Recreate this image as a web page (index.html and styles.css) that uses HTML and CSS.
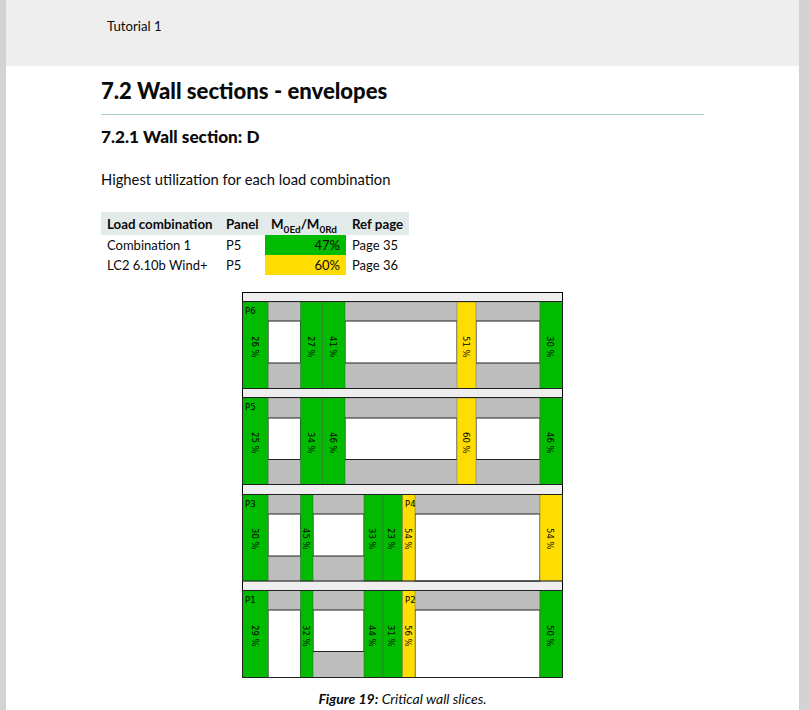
FILE: index.html
```html
<!DOCTYPE html>
<html lang="en">
<head>
<meta charset="utf-8">
<title>Tutorial 1</title>
<link rel="stylesheet" href="styles.css">
</head>
<body>
<div class="page">
  <header class="top"><span class="top-title">Tutorial 1</span></header>
  <main class="content">
    <h1 class="h1">7.2 Wall sections - envelopes</h1>
    <h2 class="h2">7.2.1 Wall section: D</h2>
    <p class="intro">Highest utilization for each load combination</p>
    <table class="util">
      <colgroup><col class="c1"><col class="c2"><col class="c3"><col class="c4"></colgroup>
      <thead>
        <tr><th>Load combination</th><th>Panel</th><th class="ratio">M<sub>0Ed</sub>/M<sub>0Rd</sub></th><th>Ref page</th></tr>
      </thead>
      <tbody>
        <tr><td>Combination 1</td><td>P5</td><td class="val green">47%</td><td>Page 35</td></tr>
        <tr><td>LC2 6.10b Wind+</td><td>P5</td><td class="val yellow">60%</td><td>Page 36</td></tr>
      </tbody>
    </table>
    <figure class="fig">
      <svg class="wall" width="322" height="388" viewBox="242 292 322 388" xmlns="http://www.w3.org/2000/svg">
        <rect class="strip" x="242.5" y="292.5" width="320" height="385"/>

        <!-- Row P6 -->
        <rect class="gray" x="268" y="302" width="272" height="86.5"/>
        <rect class="win" x="268" y="321" width="32.5" height="42"/>
        <rect class="win" x="345" y="321" width="112" height="42"/>
        <rect class="win" x="476" y="321" width="64" height="42"/>
        <rect class="g" x="242.5" y="302" width="25.5" height="86.5"/>
        <rect class="g" x="300.5" y="302" width="22" height="86.5"/>
        <rect class="g" x="322.5" y="302" width="22.5" height="86.5"/>
        <rect class="y" x="457" y="302" width="19" height="86.5"/>
        <rect class="g" x="540" y="302" width="22.5" height="86.5"/>
        <rect class="row" x="242.5" y="301.5" width="320" height="87"/>

        <!-- Row P5 -->
        <rect class="gray" x="268" y="398" width="272" height="86.5"/>
        <rect class="win" x="268" y="418" width="32.5" height="41.5"/>
        <rect class="win" x="345" y="418" width="112" height="41.5"/>
        <rect class="win" x="476" y="418" width="64" height="41.5"/>
        <rect class="g" x="242.5" y="398" width="25.5" height="86.5"/>
        <rect class="g" x="300.5" y="398" width="22" height="86.5"/>
        <rect class="g" x="322.5" y="398" width="22.5" height="86.5"/>
        <rect class="y" x="457" y="398" width="19" height="86.5"/>
        <rect class="g" x="540" y="398" width="22.5" height="86.5"/>
        <rect class="row" x="242.5" y="397.5" width="320" height="87"/>

        <!-- Row P3 / P4 -->
        <rect class="gray" x="268" y="494.5" width="272" height="86.5"/>
        <rect class="win" x="268" y="514" width="32.5" height="42"/>
        <rect class="win" x="313" y="514" width="51" height="42"/>
        <rect class="win" x="415" y="514" width="125" height="67"/>
        <rect class="g" x="242.5" y="494.5" width="25.5" height="86.5"/>
        <rect class="g" x="300.5" y="494.5" width="12.5" height="86.5"/>
        <rect class="g" x="364" y="494.5" width="19" height="86.5"/>
        <rect class="g" x="383" y="494.5" width="19.5" height="86.5"/>
        <rect class="y" x="402.5" y="494.5" width="12.5" height="86.5"/>
        <rect class="y" x="540" y="494.5" width="22.5" height="86.5"/>
        <rect class="row" x="242.5" y="494.5" width="320" height="86.5"/>

        <!-- Row P1 / P2 -->
        <rect class="gray" x="268" y="590.5" width="272" height="87"/>
        <rect class="win" x="268" y="610" width="32.5" height="67.5"/>
        <rect class="win" x="313" y="610" width="51" height="41.5"/>
        <rect class="win" x="415" y="610" width="125" height="67.5"/>
        <rect class="g" x="242.5" y="590.5" width="25.5" height="87"/>
        <rect class="g" x="300.5" y="590.5" width="12.5" height="87"/>
        <rect class="g" x="364" y="590.5" width="19" height="87"/>
        <rect class="g" x="383" y="590.5" width="19.5" height="87"/>
        <rect class="y" x="402.5" y="590.5" width="12.5" height="87"/>
        <rect class="g" x="540" y="590.5" width="22.5" height="87"/>
        <rect class="row" x="242.5" y="590.5" width="320" height="87"/>

        <!-- Panel labels -->
        <text class="lbl" x="245" y="314">P6</text>
        <text class="lbl" x="245" y="410">P5</text>
        <text class="lbl" x="245" y="507">P3</text>
        <text class="lbl" x="405" y="507">P4</text>
        <text class="lbl" x="245" y="603">P1</text>
        <text class="lbl" x="405" y="603">P2</text>

        <!-- Utilization labels -->
        <text class="pct" transform="translate(252 336) rotate(90)">26 %</text>
        <text class="pct" transform="translate(308 336) rotate(90)">27 %</text>
        <text class="pct" transform="translate(330 336) rotate(90)">41 %</text>
        <text class="pct" transform="translate(463 336) rotate(90)">51 %</text>
        <text class="pct" transform="translate(547 336) rotate(90)">30 %</text>

        <text class="pct" transform="translate(252 432) rotate(90)">25 %</text>
        <text class="pct" transform="translate(308 432) rotate(90)">34 %</text>
        <text class="pct" transform="translate(330 432) rotate(90)">46 %</text>
        <text class="pct" transform="translate(463 432) rotate(90)">60 %</text>
        <text class="pct" transform="translate(547 432) rotate(90)">46 %</text>

        <text class="pct" transform="translate(252 528) rotate(90)">30 %</text>
        <text class="pct" transform="translate(303 528) rotate(90)">45 %</text>
        <text class="pct" transform="translate(369 528) rotate(90)">33 %</text>
        <text class="pct" transform="translate(388 528) rotate(90)">23 %</text>
        <text class="pct" transform="translate(405 528) rotate(90)">54 %</text>
        <text class="pct" transform="translate(547 528) rotate(90)">54 %</text>

        <text class="pct" transform="translate(252 625) rotate(90)">29 %</text>
        <text class="pct" transform="translate(303 625) rotate(90)">32 %</text>
        <text class="pct" transform="translate(369 625) rotate(90)">44 %</text>
        <text class="pct" transform="translate(388 625) rotate(90)">31 %</text>
        <text class="pct" transform="translate(405 625) rotate(90)">56 %</text>
        <text class="pct" transform="translate(547 625) rotate(90)">50 %</text>
      </svg>
      <figcaption class="cap"><b>Figure 19:</b> Critical wall slices.</figcaption>
    </figure>
  </main>
</div>
</body>
</html>
```
FILE: styles.css
```css
html, body {
  margin: 0;
  padding: 0;
  height: 710px;
  overflow: hidden;
  background: #d3d3d3;
}
.page {
  margin: 0 11px 0 6px;
  height: 710px;
  background: #fff;
  font-family: "Lato", "Open Sans", sans-serif;
  color: #0a0a0a;
  font-feature-settings: "liga" 1;
}
.top {
  height: 66px;
  background: #eeeeee;
  box-sizing: border-box;
  padding: 18px 0 0 101px;
  font-size: 13.2px;
  line-height: 17px;
}
.content {
  padding: 0 95px;
}
.h1 {
  margin: 0;
  padding-top: 11px;
  height: 37px;
  font-size: 22.1px;
  line-height: 28px;
  font-weight: 900;
  border-bottom: 1px solid #aacfc4;
}
.h2 {
  margin: 12px 0 0;
  font-size: 17.2px;
  line-height: 20px;
  font-weight: 900;
}
.intro {
  margin: 22px 0 0;
  font-size: 14.75px;
  line-height: 20px;
}
.util {
  margin: 23px 0 0;
  border-collapse: collapse;
  table-layout: fixed;
  width: 308px;
  font-size: 13.3px;
}
.c1 { width: 119px; }
.c2 { width: 45px; }
.c3 { width: 81px; }
.c4 { width: 63px; }
.util th {
  background: #e3ebea;
  height: 23px;
  padding: 0 0 0 6px;
  text-align: left;
  font-weight: 700;
  white-space: nowrap;
}
.util td {
  height: 20px;
  padding: 0 0 0 6px;
  font-size: 13px;
  white-space: nowrap;
}
.util th.ratio {
  padding-left: 6px;
  font-weight: 700;
}
.util sub {
  font-size: 10px;
  line-height: 0;
}
.util td.val {
  text-align: right;
  padding: 0 6px 0 0;
}
.green { background: #00bb00; }
.yellow { background: #ffdd00; }
.fig {
  margin: 17px 0 0;
  width: 603px;
  display: flex;
  flex-direction: column;
  align-items: center;
}
.wall {
  display: block;
  margin-left: 1px;
}
.strip { fill: #eeeeee; stroke: #000; stroke-width: 1; }
.gray { fill: #bdbdbd; stroke: #888; stroke-width: 0.5; }
.win { fill: #fff; stroke: #222; stroke-width: 1; }
.g { fill: #00bb00; stroke: #2f7a2f; stroke-width: 0.6; }
.y { fill: #ffdd00; stroke: #8a8040; stroke-width: 0.6; }
.row { fill: none; stroke: #222; stroke-width: 1; }
.lbl, .pct {
  font-family: "DejaVu Sans", sans-serif;
  font-size: 8.5px;
  fill: #000;
}
.cap {
  margin-top: 11px;
  font-size: 14px;
  line-height: 16px;
  font-style: italic;
  text-align: center;
}
```
